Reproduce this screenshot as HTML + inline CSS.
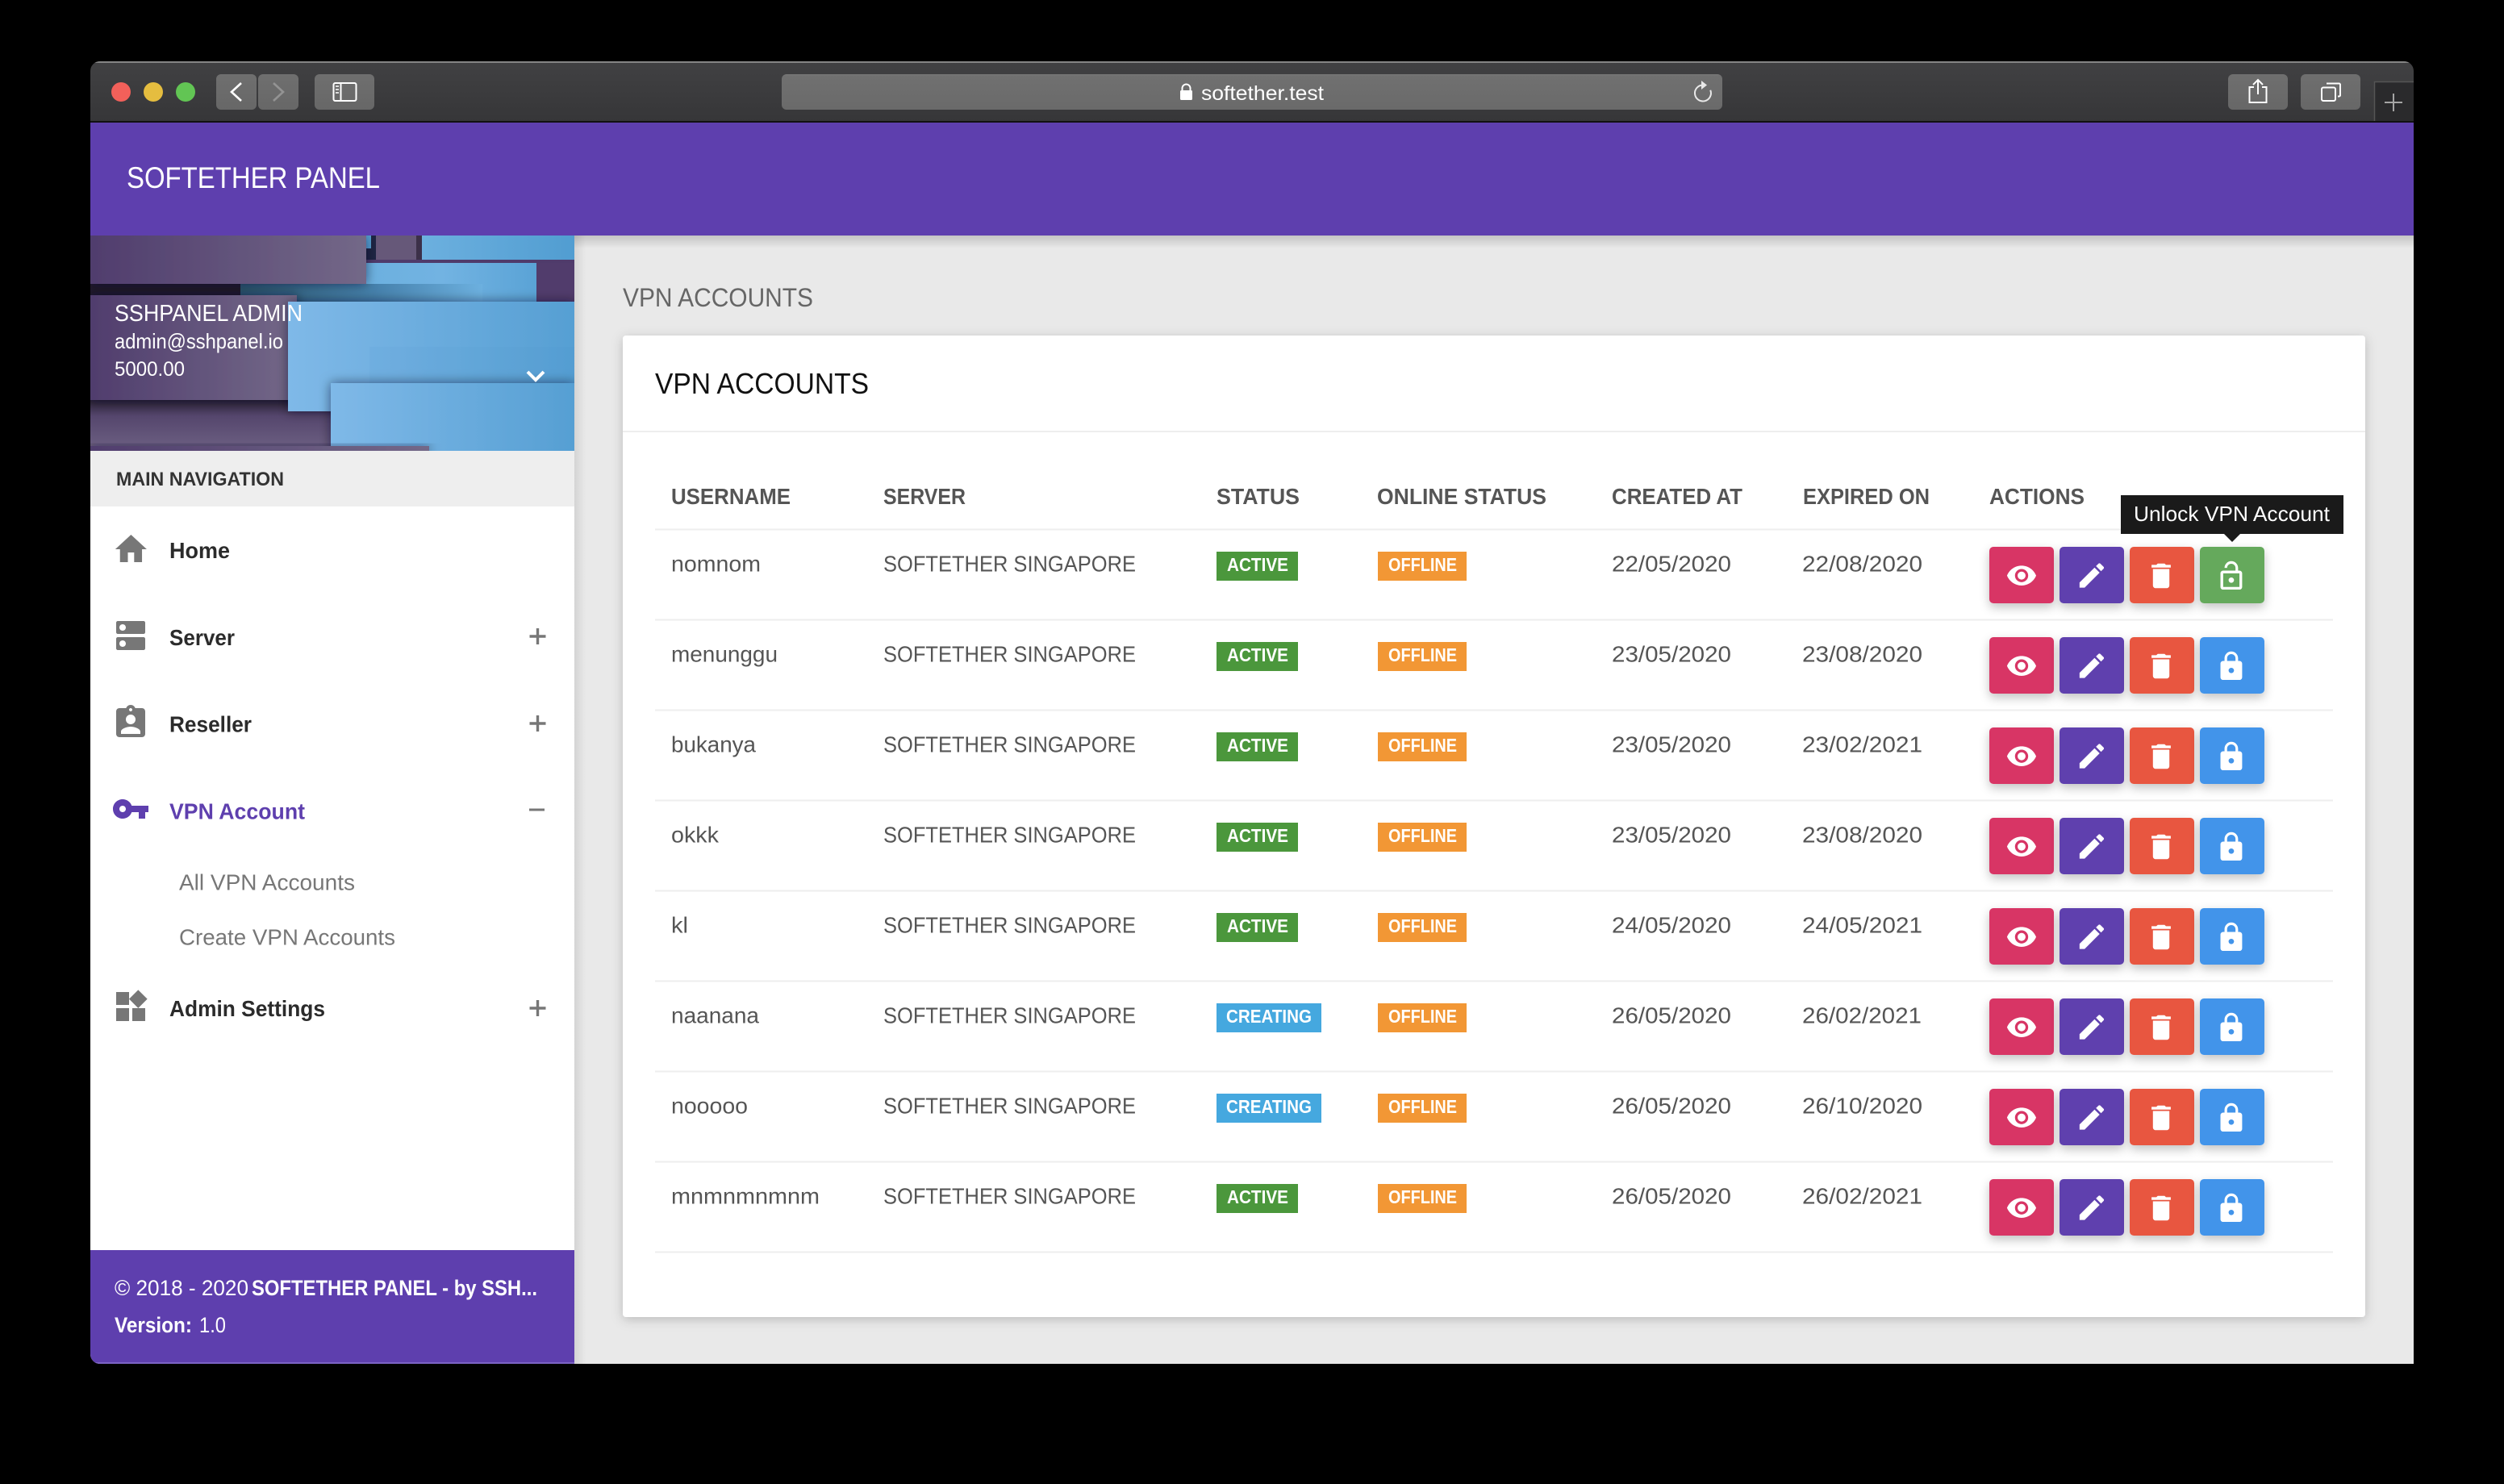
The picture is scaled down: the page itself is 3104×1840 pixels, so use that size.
<!DOCTYPE html>
<html lang="en"><head><meta charset="utf-8"><title>VPN Accounts</title>
<style>
html,body{margin:0;padding:0;background:#000;width:3104px;height:1840px;overflow:hidden}
svg{display:block;position:absolute;left:0;top:0}
text{font-family:"Liberation Sans",Arial,sans-serif}
.r{font-size:28px;fill:#555}
.h{font-size:28px;fill:#555;font-weight:700}
.b{font-size:23px;fill:#fff;font-weight:700}
.n{font-size:28px;fill:#2b2b2b;font-weight:700}
.s{font-size:28px;fill:#777}
.f{font-size:27px;fill:#fff}
.fb{font-size:27px;fill:#fff;font-weight:700}
</style></head>
<body>
<svg width="3104" height="1840" viewBox="0 0 3104 1840" xmlns="http://www.w3.org/2000/svg">
<defs>
<linearGradient id="tb" x1="0" y1="0" x2="0" y2="1"><stop offset="0" stop-color="#414143"/><stop offset="1" stop-color="#363638"/></linearGradient>
<linearGradient id="btn" x1="0" y1="0" x2="0" y2="1"><stop offset="0" stop-color="#6f6f6f"/><stop offset="1" stop-color="#676767"/></linearGradient>
<linearGradient id="url" x1="0" y1="0" x2="0" y2="1"><stop offset="0" stop-color="#777"/><stop offset=".06" stop-color="#707070"/><stop offset="1" stop-color="#6a6a6a"/></linearGradient>
<linearGradient id="pu" x1="0" y1="0" x2="1" y2="0"><stop offset="0" stop-color="#503d6d"/><stop offset="1" stop-color="#736888"/></linearGradient>
<linearGradient id="bl" x1="0" y1="0" x2="1" y2="0"><stop offset="0" stop-color="#7fb9e8"/><stop offset="1" stop-color="#569fd3"/></linearGradient>
<linearGradient id="bl2" x1="0" y1="0" x2="1" y2="0"><stop offset="0" stop-color="#6cb0df"/><stop offset="1" stop-color="#519dd1"/></linearGradient>
<linearGradient id="bl3" x1="0" y1="0" x2="1" y2="0"><stop offset="0" stop-color="#6cb0df"/><stop offset=".45" stop-color="#72b3e2"/><stop offset="1" stop-color="#5aa3d6"/></linearGradient>
<linearGradient id="teal" x1="0" y1="0" x2="1" y2="0"><stop offset="0" stop-color="#2d5873"/><stop offset=".55" stop-color="#4580ab"/><stop offset="1" stop-color="#6cb0df"/></linearGradient>
<linearGradient id="dk" x1="0" y1="0" x2="0" y2="1"><stop offset="0" stop-color="#2a2236"/><stop offset=".35" stop-color="#55466d"/><stop offset="1" stop-color="#6a5d80"/></linearGradient>
<linearGradient id="tops" x1="0" y1="0" x2="0" y2="1"><stop offset="0" stop-color="#000" stop-opacity=".16"/><stop offset="1" stop-color="#000" stop-opacity="0"/></linearGradient>
<linearGradient id="sides" x1="0" y1="0" x2="1" y2="0"><stop offset="0" stop-color="#000" stop-opacity=".09"/><stop offset="1" stop-color="#000" stop-opacity="0"/></linearGradient>
<filter id="card" x="-5%" y="-5%" width="110%" height="110%"><feDropShadow dx="0" dy="3" stdDeviation="7" flood-color="#000" flood-opacity=".2"/></filter>
<filter id="bs" x="-30%" y="-30%" width="160%" height="170%"><feDropShadow dx="0" dy="5" stdDeviation="6" flood-color="#000" flood-opacity=".24"/></filter>
<filter id="ban" x="-20%" y="-40%" width="140%" height="180%"><feDropShadow dx="0" dy="0" stdDeviation="7" flood-color="#0d1020" flood-opacity=".55"/></filter>
<clipPath id="bc"><rect x="112" y="292" width="600" height="267"/></clipPath>
<clipPath id="win"><path d="M124 76H2980a12 12 0 0 1 12 12V1691H124a12 12 0 0 1-12-12V88a12 12 0 0 1 12-12z"/></clipPath>
<path id="i-lock" fill="#fff" d="M18 8h-1V6c0-2.76-2.24-5-5-5S7 3.24 7 6v2H6c-1.1 0-2 .9-2 2v10c0 1.1.9 2 2 2h12c1.1 0 2-.9 2-2V10c0-1.1-.9-2-2-2zm-6 9c-1.1 0-2-.9-2-2s.9-2 2-2 2 .9 2 2-.9 2-2 2zm3.1-9H8.9V6c0-1.71 1.39-3.1 3.1-3.1 1.71 0 3.1 1.39 3.1 3.1v2z"/>
<g id="btns">
<rect x="2466" y="678" width="80" height="70" rx="5" fill="#d83565" filter="url(#bs)"/>
<rect x="2553" y="678" width="80" height="70" rx="5" fill="#5e3fae" filter="url(#bs)"/>
<rect x="2640" y="678" width="80" height="70" rx="5" fill="#e8563f" filter="url(#bs)"/>
<path fill="#fff" transform="translate(2486.3 694) scale(1.64)" d="M12 4.5C7 4.5 2.73 7.61 1 12c1.73 4.39 6 7.5 11 7.5s9.27-3.11 11-7.5c-1.73-4.39-6-7.5-11-7.5zM12 17c-2.76 0-5-2.24-5-5s2.24-5 5-5 5 2.24 5 5-2.24 5-5 5zm0-8c-1.66 0-3 1.34-3 3s1.34 3 3 3 3-1.34 3-3-1.34-3-3-3z"/>
<path fill="#fff" transform="translate(2572.8 693.3) scale(1.68)" d="M3 17.25V21h3.75L17.81 9.94l-3.75-3.75L3 17.25zM20.71 7.04c.39-.39.39-1.02 0-1.41l-2.34-2.34c-.39-.39-1.02-.39-1.41 0l-1.83 1.83 3.75 3.75 1.83-1.83z"/>
<path fill="#fff" transform="translate(2658.6 693.6) scale(1.7)" d="M6 19c0 1.1.9 2 2 2h8c1.1 0 2-.9 2-2V7H6v12zM19 4h-3.5l-1-1h-5l-1 1H5v2h14V4z"/>
</g>
<g id="blue">
<rect x="2727" y="678" width="80" height="70" rx="5" fill="#4294ea" filter="url(#bs)"/>
<use href="#i-lock" transform="translate(2745.8 694.1) scale(1.68)"/>
</g>
<path id="plus" d="M-10-1.7H-1.7V-10H1.7V-1.7H10V1.7H1.7V10H-1.7V1.7H-10z" fill="#777"/>
</defs>

<rect width="3104" height="1840" fill="#000"/>
<g clip-path="url(#win)">
<!-- title bar -->
<rect x="112" y="76" width="2880" height="76" fill="url(#tb)"/>
<rect x="112" y="76" width="2880" height="2" fill="#858585"/>
<rect x="112" y="150" width="2880" height="2" fill="#111"/>
<!-- content bg -->
<rect x="112" y="152" width="2880" height="1539" fill="#e9e9e9"/>
<!-- header -->
<rect x="112" y="152" width="2880" height="140" fill="#5e3fae"/>
<rect x="712" y="292" width="2280" height="16" fill="url(#tops)"/>
<!-- sidebar -->
<rect x="712" y="292" width="14" height="1399" fill="url(#sides)"/>
<rect x="112" y="559" width="600" height="991" fill="#fff"/>
<rect x="112" y="559" width="600" height="69" fill="#eee"/>
<rect x="112" y="1550" width="600" height="141" fill="#5e3fae"/>
<rect x="112" y="1689" width="600" height="2" fill="#7b63c4"/>
<!-- banner -->
<g clip-path="url(#bc)">
<rect x="112" y="292" width="600" height="267" fill="#4f3b6b"/>
<rect x="523" y="292" width="189" height="30" fill="url(#bl2)"/>
<rect x="454" y="292" width="12" height="30" fill="#1f2544"/>
<rect x="454" y="292" width="6" height="16" fill="#58a3d6"/>
<rect x="466" y="292" width="57" height="30" fill="#665879"/>
<rect x="516" y="292" width="7" height="30" fill="#3c3049"/>
<rect x="665" y="326" width="47" height="47" fill="#513c6c"/>
<rect x="454" y="326" width="211" height="48" fill="url(#bl3)"/>
<rect x="298" y="352" width="300" height="22" fill="url(#teal)"/>
<rect x="454" y="326" width="211" height="26" fill="url(#bl3)"/>
<rect x="112" y="352" width="186" height="14" fill="#211a2e"/>
<rect x="112" y="292" width="342" height="60" fill="url(#pu)" filter="url(#ban)"/>
<rect x="112" y="496" width="298" height="57" fill="url(#dk)"/>
<rect x="112" y="366" width="256" height="130" fill="url(#pu)" filter="url(#ban)"/>
<rect x="357" y="374" width="355" height="136" fill="url(#bl)" filter="url(#ban)"/>
<rect x="458" y="430" width="254" height="45" fill="#4c92c4" opacity=".07"/>
<rect x="410" y="475" width="302" height="84" fill="url(#bl)" filter="url(#ban)"/>
<rect x="112" y="553" width="420" height="8" fill="url(#pu)" filter="url(#ban)"/>
</g>
</g>

<!-- traffic lights -->
<circle cx="150" cy="114" r="12" fill="#f2605a"/><circle cx="190" cy="114" r="12" fill="#e5bd3f"/><circle cx="230" cy="114" r="12" fill="#62c554"/>
<!-- toolbar buttons -->
<rect x="268" y="92" width="50" height="44" rx="6" fill="url(#btn)"/>
<rect x="320" y="92" width="50" height="44" rx="6" fill="url(#btn)"/>
<rect x="390" y="92" width="74" height="44" rx="6" fill="url(#btn)"/>
<path d="M299 103 287 114 299 125" fill="none" stroke="#fff" stroke-width="2.6"/>
<path d="M339 103 351 114 339 125" fill="none" stroke="#939393" stroke-width="2.6"/>
<rect x="413.5" y="103" width="28" height="22" rx="2" fill="none" stroke="#fff" stroke-width="2"/>
<path d="M422.5 103V125" stroke="#fff" stroke-width="2"/>
<path d="M416 107h4M416 111h4M416 115h4" stroke="#ddd" stroke-width="2"/>
<rect x="969" y="92" width="1166" height="44" rx="6" fill="url(#url)"/>
<path d="M1465.5 113v-3.5a5 5 0 0 1 10 0V113" fill="none" stroke="#fff" stroke-width="2"/>
<rect x="1463" y="112" width="15" height="12" rx="1.5" fill="#fff"/>
<text x="1489" y="124" font-size="25" fill="#fff" textLength="152" lengthAdjust="spacingAndGlyphs">softether.test</text>
<path d="M2111 105.5a10 10 0 1 0 9.2 6.2" fill="none" stroke="#e8e8e8" stroke-width="2"/>
<path d="M2109 100l7 5.5-7 5.5z" fill="#e8e8e8"/>
<rect x="2762" y="92" width="74" height="44" rx="6" fill="url(#btn)"/>
<rect x="2852" y="92" width="74" height="44" rx="6" fill="url(#btn)"/>
<path d="M2794 108h-5.5v19h21v-19H2804M2799 117V99.5M2793 105l6-6 6 6" fill="none" stroke="#fff" stroke-width="2"/>
<rect x="2878" y="108.5" width="17" height="16.5" rx="2" fill="none" stroke="#fff" stroke-width="2"/>
<path d="M2884 103.5h15.5a1.5 1.5 0 0 1 1.5 1.5v13a1.5 1.5 0 0 1-1.5 1.5H2898" fill="none" stroke="#fff" stroke-width="2"/>
<rect x="2943" y="101" width="49" height="49" fill="#2a2a2c"/>
<path d="M2943.5 150V101.5H2992" fill="none" stroke="#555" stroke-width="1.5"/>
<path d="M2956 127h22M2967 116v22" stroke="#a5a5a5" stroke-width="2"/>

<!-- header text -->
<text x="157" y="233" font-size="37" fill="#fff" textLength="314" lengthAdjust="spacingAndGlyphs">SOFTETHER PANEL</text>
<!-- user -->
<text x="142" y="398" font-size="29" fill="#fff" textLength="233" lengthAdjust="spacingAndGlyphs">SSHPANEL ADMIN</text>
<text x="142" y="432" font-size="26" fill="#fff" textLength="209" lengthAdjust="spacingAndGlyphs">admin@sshpanel.io</text>
<text x="142" y="466" font-size="25" fill="#fff" textLength="87" lengthAdjust="spacingAndGlyphs">5000.00</text>
<path d="M654 461 664 471 674 461" fill="none" stroke="#fff" stroke-width="4"/>

<!-- nav -->
<text x="144" y="602" font-size="24" font-weight="700" fill="#333" textLength="208" lengthAdjust="spacingAndGlyphs">MAIN NAVIGATION</text>
<path fill="#777" transform="translate(139 657) scale(1.95 2)" d="M10 20v-6h4v6h5v-8h3L12 3 2 12h3v8z"/>
<text class="n" x="210" y="692" textLength="75" lengthAdjust="spacingAndGlyphs">Home</text>
<path fill="#777" transform="translate(138 764) scale(2)" d="M20 13H4c-.55 0-1 .45-1 1v6c0 .55.45 1 1 1h16c.55 0 1-.45 1-1v-6c0-.55-.45-1-1-1zM7 19c-1.1 0-2-.9-2-2s.9-2 2-2 2 .9 2 2-.9 2-2 2zM20 3H4c-.55 0-1 .45-1 1v6c0 .55.45 1 1 1h16c.55 0 1-.45 1-1V4c0-.55-.45-1-1-1zM7 9c-1.1 0-2-.9-2-2s.9-2 2-2 2 .9 2 2-.9 2-2 2z"/>
<text class="n" x="210" y="800" textLength="81" lengthAdjust="spacingAndGlyphs">Server</text>
<use href="#plus" x="666.5" y="789"/>
<path fill="#777" transform="translate(138 872) scale(2)" d="M19 3h-4.18C14.4 1.84 13.3 1 12 1c-1.3 0-2.4.84-2.82 2H5c-1.1 0-2 .9-2 2v14c0 1.1.9 2 2 2h14c1.1 0 2-.9 2-2V5c0-1.1-.9-2-2-2zm-7 0c.55 0 1 .45 1 1s-.45 1-1 1-1-.45-1-1 .45-1 1-1zm0 4c1.66 0 3 1.34 3 3s-1.34 3-3 3-3-1.34-3-3 1.34-3 3-3zm6 12H6v-1.4c0-2 4-3.1 6-3.1s6 1.1 6 3.1V19z"/>
<text class="n" x="210" y="907.5" textLength="102" lengthAdjust="spacingAndGlyphs">Reseller</text>
<use href="#plus" x="666.5" y="897"/>
<path fill="#5e3fae" transform="translate(138 979) scale(2)" d="M12.65 10C11.83 7.67 9.61 6 7 6c-3.31 0-6 2.69-6 6s2.69 6 6 6c2.61 0 4.83-1.67 5.65-4H17v4h4v-4h2v-4H12.65zM7 14c-1.1 0-2-.9-2-2s.9-2 2-2 2 .9 2 2-.9 2-2 2z"/>
<text x="210" y="1015.5" font-size="28" font-weight="700" fill="#5e3fae" textLength="168" lengthAdjust="spacingAndGlyphs">VPN Account</text>
<rect x="656" y="1002.5" width="19" height="3" fill="#777"/>
<text class="s" x="222" y="1103.5" textLength="218" lengthAdjust="spacingAndGlyphs">All VPN Accounts</text>
<text class="s" x="222" y="1171.5" textLength="268" lengthAdjust="spacingAndGlyphs">Create VPN Accounts</text>
<path fill="#777" transform="translate(138 1224) scale(2)" d="M13 13v8h8v-8h-8zM3 21h8v-8H3v8zM3 3v8h8V3H3zm13.66-1.31L11 7.34 16.66 13l5.66-5.66-5.66-5.65z"/>
<text class="n" x="210" y="1260" textLength="193" lengthAdjust="spacingAndGlyphs">Admin Settings</text>
<use href="#plus" x="666.5" y="1250"/>

<!-- footer -->
<text class="f" x="142" y="1606" textLength="166" lengthAdjust="spacingAndGlyphs">© 2018 - 2020</text>
<text class="fb" x="312" y="1606" textLength="354" lengthAdjust="spacingAndGlyphs">SOFTETHER PANEL - by SSH...</text>
<text class="fb" x="142" y="1652" textLength="96" lengthAdjust="spacingAndGlyphs">Version:</text>
<text class="f" x="247" y="1652" textLength="33" lengthAdjust="spacingAndGlyphs">1.0</text>

<!-- page title + card -->
<text x="772" y="380" font-size="32" fill="#666" textLength="236" lengthAdjust="spacingAndGlyphs">VPN ACCOUNTS</text>
<rect x="772" y="416" width="2160" height="1217" rx="4" fill="#fff" filter="url(#card)"/>
<text x="812" y="488" font-size="36" fill="#111" textLength="265" lengthAdjust="spacingAndGlyphs">VPN ACCOUNTS</text>
<rect x="772" y="534" width="2160" height="2" fill="#eee"/>

<!-- table head -->
<text class="h" x="832" y="625" textLength="148" lengthAdjust="spacingAndGlyphs">USERNAME</text>
<text class="h" x="1095" y="625" textLength="102" lengthAdjust="spacingAndGlyphs">SERVER</text>
<text class="h" x="1508" y="625" textLength="103" lengthAdjust="spacingAndGlyphs">STATUS</text>
<text class="h" x="1707" y="625" textLength="210" lengthAdjust="spacingAndGlyphs">ONLINE STATUS</text>
<text class="h" x="1998" y="625" textLength="162" lengthAdjust="spacingAndGlyphs">CREATED AT</text>
<text class="h" x="2235" y="625" textLength="157" lengthAdjust="spacingAndGlyphs">EXPIRED ON</text>
<text class="h" x="2466" y="625" textLength="118" lengthAdjust="spacingAndGlyphs">ACTIONS</text>

<g fill="#eee">
<rect x="812" y="655.5" width="2080" height="2"/><rect x="812" y="767.5" width="2080" height="2"/><rect x="812" y="879.5" width="2080" height="2"/><rect x="812" y="991.5" width="2080" height="2"/><rect x="812" y="1103.5" width="2080" height="2"/><rect x="812" y="1215.5" width="2080" height="2"/><rect x="812" y="1327.5" width="2080" height="2"/><rect x="812" y="1439.5" width="2080" height="2"/><rect x="812" y="1551.5" width="2080" height="2"/>
</g>

<!-- row 1 -->
<text class="r" x="832" y="708.5" textLength="111" lengthAdjust="spacingAndGlyphs">nomnom</text>
<text class="r" x="1095" y="708.5" textLength="313" lengthAdjust="spacingAndGlyphs">SOFTETHER SINGAPORE</text>
<rect x="1508" y="684" width="101" height="36" fill="#4b973c"/><text class="b" x="1521" y="708" textLength="76" lengthAdjust="spacingAndGlyphs">ACTIVE</text>
<rect x="1708" y="684" width="110" height="36" fill="#f29735"/><text class="b" x="1721" y="708" textLength="85" lengthAdjust="spacingAndGlyphs">OFFLINE</text>
<text class="r" x="1998" y="708.5" textLength="148" lengthAdjust="spacingAndGlyphs">22/05/2020</text>
<text class="r" x="2234" y="708.5" textLength="149" lengthAdjust="spacingAndGlyphs">22/08/2020</text>
<use href="#btns"/>
<rect x="2727" y="678" width="80" height="70" rx="5" fill="#65a95b" filter="url(#bs)"/>
<path fill="#fff" transform="translate(2745.8 694.1) scale(1.68)" d="M12 17c1.1 0 2-.9 2-2s-.9-2-2-2-2 .9-2 2 .9 2 2 2zm6-9h-1V6c0-2.76-2.24-5-5-5S7 3.24 7 6h1.9c0-1.71 1.39-3.1 3.1-3.1 1.71 0 3.1 1.39 3.1 3.1v2H6c-1.1 0-2 .9-2 2v10c0 1.1.9 2 2 2h12c1.1 0 2-.9 2-2V10c0-1.1-.9-2-2-2zm0 12H6V10h12v10z"/>
<rect x="2629" y="614" width="276" height="48" fill="#1a1a1a"/>
<path d="M2757 662h20l-10 10z" fill="#1a1a1a"/>
<text x="2645" y="646" font-size="26" fill="#fff" textLength="243" lengthAdjust="spacingAndGlyphs">Unlock VPN Account</text>

<!-- row 2 -->
<text class="r" x="832" y="820.5" textLength="132" lengthAdjust="spacingAndGlyphs">menunggu</text>
<text class="r" x="1095" y="820.5" textLength="313" lengthAdjust="spacingAndGlyphs">SOFTETHER SINGAPORE</text>
<rect x="1508" y="796" width="101" height="36" fill="#4b973c"/><text class="b" x="1521" y="820" textLength="76" lengthAdjust="spacingAndGlyphs">ACTIVE</text>
<rect x="1708" y="796" width="110" height="36" fill="#f29735"/><text class="b" x="1721" y="820" textLength="85" lengthAdjust="spacingAndGlyphs">OFFLINE</text>
<text class="r" x="1998" y="820.5" textLength="148" lengthAdjust="spacingAndGlyphs">23/05/2020</text>
<text class="r" x="2234" y="820.5" textLength="149" lengthAdjust="spacingAndGlyphs">23/08/2020</text>
<use href="#btns" y="112"/><use href="#blue" y="112"/>

<!-- row 3 -->
<text class="r" x="832" y="932.5" textLength="105" lengthAdjust="spacingAndGlyphs">bukanya</text>
<text class="r" x="1095" y="932.5" textLength="313" lengthAdjust="spacingAndGlyphs">SOFTETHER SINGAPORE</text>
<rect x="1508" y="908" width="101" height="36" fill="#4b973c"/><text class="b" x="1521" y="932" textLength="76" lengthAdjust="spacingAndGlyphs">ACTIVE</text>
<rect x="1708" y="908" width="110" height="36" fill="#f29735"/><text class="b" x="1721" y="932" textLength="85" lengthAdjust="spacingAndGlyphs">OFFLINE</text>
<text class="r" x="1998" y="932.5" textLength="148" lengthAdjust="spacingAndGlyphs">23/05/2020</text>
<text class="r" x="2234" y="932.5" textLength="149" lengthAdjust="spacingAndGlyphs">23/02/2021</text>
<use href="#btns" y="224"/><use href="#blue" y="224"/>

<!-- row 4 -->
<text class="r" x="832" y="1044.5" textLength="59" lengthAdjust="spacingAndGlyphs">okkk</text>
<text class="r" x="1095" y="1044.5" textLength="313" lengthAdjust="spacingAndGlyphs">SOFTETHER SINGAPORE</text>
<rect x="1508" y="1020" width="101" height="36" fill="#4b973c"/><text class="b" x="1521" y="1044" textLength="76" lengthAdjust="spacingAndGlyphs">ACTIVE</text>
<rect x="1708" y="1020" width="110" height="36" fill="#f29735"/><text class="b" x="1721" y="1044" textLength="85" lengthAdjust="spacingAndGlyphs">OFFLINE</text>
<text class="r" x="1998" y="1044.5" textLength="148" lengthAdjust="spacingAndGlyphs">23/05/2020</text>
<text class="r" x="2234" y="1044.5" textLength="149" lengthAdjust="spacingAndGlyphs">23/08/2020</text>
<use href="#btns" y="336"/><use href="#blue" y="336"/>

<!-- row 5 -->
<text class="r" x="832" y="1156.5" textLength="21" lengthAdjust="spacingAndGlyphs">kl</text>
<text class="r" x="1095" y="1156.5" textLength="313" lengthAdjust="spacingAndGlyphs">SOFTETHER SINGAPORE</text>
<rect x="1508" y="1132" width="101" height="36" fill="#4b973c"/><text class="b" x="1521" y="1156" textLength="76" lengthAdjust="spacingAndGlyphs">ACTIVE</text>
<rect x="1708" y="1132" width="110" height="36" fill="#f29735"/><text class="b" x="1721" y="1156" textLength="85" lengthAdjust="spacingAndGlyphs">OFFLINE</text>
<text class="r" x="1998" y="1156.5" textLength="148" lengthAdjust="spacingAndGlyphs">24/05/2020</text>
<text class="r" x="2234" y="1156.5" textLength="149" lengthAdjust="spacingAndGlyphs">24/05/2021</text>
<use href="#btns" y="448"/><use href="#blue" y="448"/>

<!-- row 6 -->
<text class="r" x="832" y="1268.5" textLength="109" lengthAdjust="spacingAndGlyphs">naanana</text>
<text class="r" x="1095" y="1268.5" textLength="313" lengthAdjust="spacingAndGlyphs">SOFTETHER SINGAPORE</text>
<rect x="1508" y="1244" width="130" height="36" fill="#45a8df"/><text class="b" x="1520" y="1268" textLength="106" lengthAdjust="spacingAndGlyphs">CREATING</text>
<rect x="1708" y="1244" width="110" height="36" fill="#f29735"/><text class="b" x="1721" y="1268" textLength="85" lengthAdjust="spacingAndGlyphs">OFFLINE</text>
<text class="r" x="1998" y="1268.5" textLength="148" lengthAdjust="spacingAndGlyphs">26/05/2020</text>
<text class="r" x="2234" y="1268.5" textLength="148" lengthAdjust="spacingAndGlyphs">26/02/2021</text>
<use href="#btns" y="560"/><use href="#blue" y="560"/>

<!-- row 7 -->
<text class="r" x="832" y="1380.5" textLength="95" lengthAdjust="spacingAndGlyphs">nooooo</text>
<text class="r" x="1095" y="1380.5" textLength="313" lengthAdjust="spacingAndGlyphs">SOFTETHER SINGAPORE</text>
<rect x="1508" y="1356" width="130" height="36" fill="#45a8df"/><text class="b" x="1520" y="1380" textLength="106" lengthAdjust="spacingAndGlyphs">CREATING</text>
<rect x="1708" y="1356" width="110" height="36" fill="#f29735"/><text class="b" x="1721" y="1380" textLength="85" lengthAdjust="spacingAndGlyphs">OFFLINE</text>
<text class="r" x="1998" y="1380.5" textLength="148" lengthAdjust="spacingAndGlyphs">26/05/2020</text>
<text class="r" x="2234" y="1380.5" textLength="149" lengthAdjust="spacingAndGlyphs">26/10/2020</text>
<use href="#btns" y="672"/><use href="#blue" y="672"/>

<!-- row 8 -->
<text class="r" x="832" y="1492.5" textLength="184" lengthAdjust="spacingAndGlyphs">mnmnmnmnm</text>
<text class="r" x="1095" y="1492.5" textLength="313" lengthAdjust="spacingAndGlyphs">SOFTETHER SINGAPORE</text>
<rect x="1508" y="1468" width="101" height="36" fill="#4b973c"/><text class="b" x="1521" y="1492" textLength="76" lengthAdjust="spacingAndGlyphs">ACTIVE</text>
<rect x="1708" y="1468" width="110" height="36" fill="#f29735"/><text class="b" x="1721" y="1492" textLength="85" lengthAdjust="spacingAndGlyphs">OFFLINE</text>
<text class="r" x="1998" y="1492.5" textLength="148" lengthAdjust="spacingAndGlyphs">26/05/2020</text>
<text class="r" x="2234" y="1492.5" textLength="149" lengthAdjust="spacingAndGlyphs">26/02/2021</text>
<use href="#btns" y="784"/><use href="#blue" y="784"/>
</svg>
</body></html>
